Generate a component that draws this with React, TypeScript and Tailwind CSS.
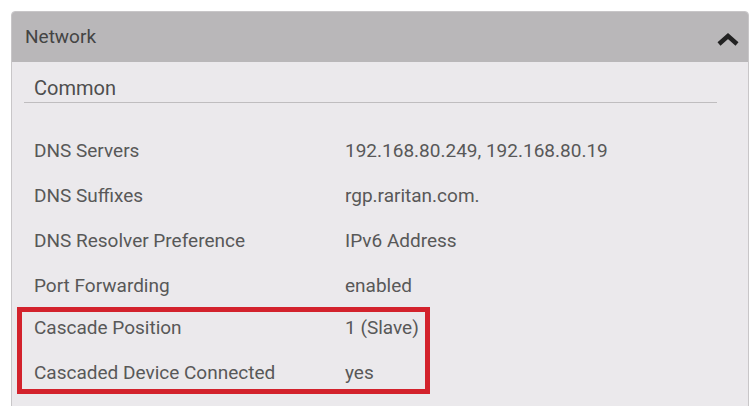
const rows = [
  { label: "DNS Servers", value: "192.168.80.249, 192.168.80.19" },
  { label: "DNS Suffixes", value: "rgp.raritan.com." },
  { label: "DNS Resolver Preference", value: "IPv6 Address" },
  { label: "Port Forwarding", value: "enabled" },
];

const cascade = [
  { label: "Cascade Position", value: "1 (Slave)" },
  { label: "Cascaded Device Connected", value: "yes" },
];

const ChevronUp = () => (
  <svg width="24" height="16" viewBox="0 0 24 16" className="mt-[4px]">
    <polyline
      points="3,13 12,5 21,13"
      fill="none"
      stroke="#222"
      strokeWidth="4.5"
      strokeLinejoin="miter"
    />
  </svg>
);

export default function App() {
  return (
    <div className="h-screen w-screen overflow-hidden bg-white pt-[11px] pl-[11px] font-['Roboto',sans-serif]">
      <div className="w-[738px] rounded-t-[4px] border border-[#c8c6c8] bg-[#ebe9ec]">
        <div className="flex h-[50px] items-center justify-between rounded-t-[3px] bg-[#b9b7b9] pl-[13px] pr-[8px]">
          <span className="text-[19px] text-[#444]">Network</span>
          <ChevronUp />
        </div>
        <div className="ml-[12px] mr-[31px]">
          <div className="h-[41px] border-b border-[#bfbdbf] pt-[12px] pl-[10px] text-[20px] leading-[28px] text-[#4e4e4e]">
            Common
          </div>
        </div>
        <div className="mt-[26px] pb-[30px] pl-[5px] text-[19px] text-[#585858]">
          {rows.map((r) => (
            <div key={r.label} className="flex h-[45px] items-center pl-[17px]">
              <span className="w-[311px]">{r.label}</span>
              <span>{r.value}</span>
            </div>
          ))}
          <div className="-mt-[2px] flex w-[413px] flex-col gap-[13px] border-[5px] border-[#d3222c]">
            {cascade.map((r) => (
              <div key={r.label} className="flex h-[32px] items-center pl-[12px]">
                <span className="w-[311px]">{r.label}</span>
                <span>{r.value}</span>
              </div>
            ))}
          </div>
        </div>
      </div>
    </div>
  );
}
